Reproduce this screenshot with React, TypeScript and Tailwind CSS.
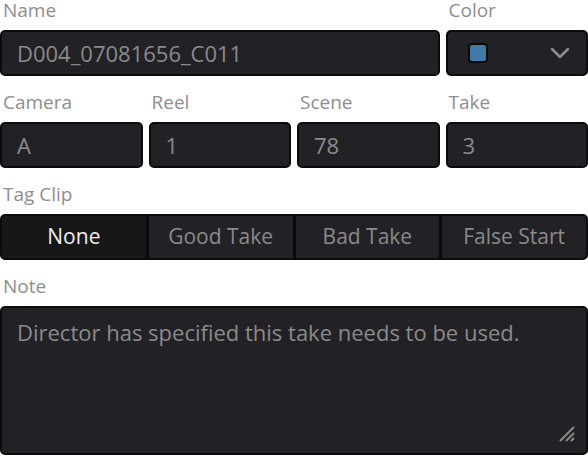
import React from "react";

const font = { fontFamily: '"Open Sans", "Noto Sans", sans-serif' };

function Label({ children }: { children: React.ReactNode }) {
  return (
    <div className="h-[22px] leading-[20px] text-[19px] text-[#8e8e8e] mb-[8px] pl-[3px]">
      {children}
    </div>
  );
}

function Field({ value }: { value: string }) {
  return (
    <div className="h-[46px] rounded-[5px] border-2 border-[#0b0b0b] bg-[#222226] flex items-center pl-[15px] text-[22px] text-[#8a8a8a]">
      {value}
    </div>
  );
}

export default function App() {
  const tags = ["None", "Good Take", "Bad Take", "False Start"];
  return (
    <div className="w-[588px] h-[456px] bg-white overflow-hidden" style={font}>
      <div className="grid grid-cols-4 gap-x-[6px]">
        <div className="col-span-3">
          <Label>Name</Label>
          <Field value="D004_07081656_C011" />
        </div>
        <div>
          <Label>Color</Label>
          <div className="h-[46px] rounded-[5px] border-2 border-[#0b0b0b] bg-[#222226] flex items-center justify-between pl-[20px] pr-[16px]">
            <div className="w-[20px] h-[20px] rounded-[4px] border-2 border-[#0b0b0b] bg-[#4279a8]" />
            <svg width="20" height="12" viewBox="0 0 20 12" fill="none">
              <path d="M2 2 L10 10 L18 2" stroke="#8a8a8a" strokeWidth="2.6" strokeLinecap="round" strokeLinejoin="round" />
            </svg>
          </div>
        </div>
      </div>

      <div className="grid grid-cols-4 gap-x-[6px] mt-[16px]">
        {[
          ["Camera", "A"],
          ["Reel", "1"],
          ["Scene", "78"],
          ["Take", "3"],
        ].map(([l, v]) => (
          <div key={l}>
            <Label>{l}</Label>
            <Field value={v} />
          </div>
        ))}
      </div>

      <div className="mt-[16px]">
        <Label>Tag Clip</Label>
        <div className="h-[46px] rounded-[5px] border-2 border-[#0b0b0b] bg-[#0b0b0b] flex gap-[3px] overflow-hidden">
          {tags.map((t, i) => (
            <div
              key={t}
              className={
                i === 0
                  ? "flex-1 flex items-center justify-center bg-[#171717] text-[21px] text-[#f0f0f0]"
                  : "flex-1 flex items-center justify-center bg-[#222226] text-[21px] text-[#8a8a8a]"
              }
            >
              {t}
            </div>
          ))}
        </div>
      </div>

      <div className="mt-[16px]">
        <Label>Note</Label>
        <div className="relative h-[149px] rounded-[5px] border-2 border-[#0b0b0b] bg-[#222226] pl-[15px] pt-[8px] text-[22px] text-[#8a8a8a]">
          Director has specified this take needs to be used.
          <svg className="absolute right-[10px] bottom-[10px]" width="18" height="18" viewBox="0 0 18 18">
            <path d="M2 16 L16 2 M8 16 L16 8 M13 16 L16 13" stroke="#8a8a8a" strokeWidth="2" />
          </svg>
        </div>
      </div>
    </div>
  );
}
